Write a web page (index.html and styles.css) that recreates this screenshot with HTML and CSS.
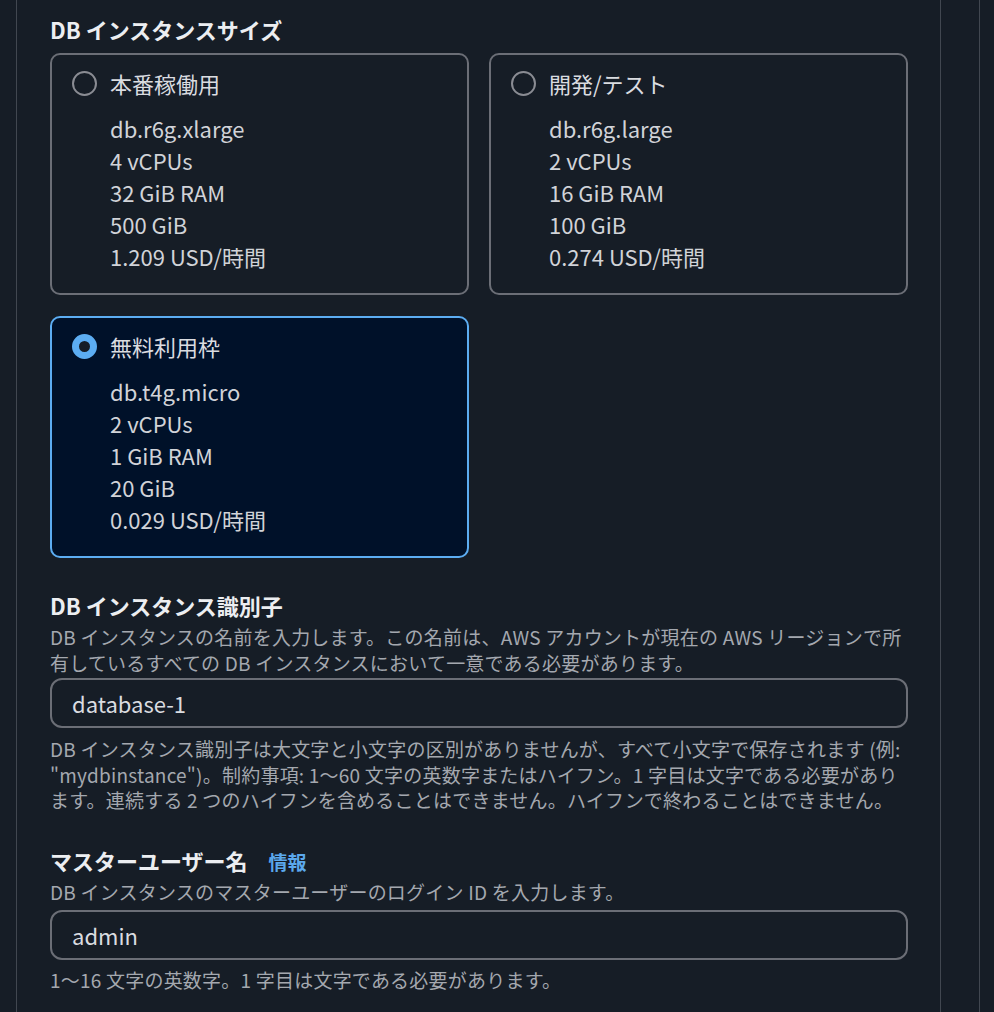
FILE: index.html
```html
<!DOCTYPE html>
<html lang="ja">
<head>
    <meta charset="UTF-8">
    <meta name="viewport" content="width=device-width, initial-scale=1.0">
    <title>データベースの作成</title>
    <link rel="stylesheet" href="styles.css">
</head>
<body>
    <div class="layout">
        <div class="panel">
            <!-- DB instance size -->
            <div class="field">
                <div class="label">DB インスタンスサイズ</div>
                <div class="tiles">
                    <div class="tile">
                        <div class="tile-head">
                            <span class="radio"></span>
                            <span class="tile-title">本番稼働用</span>
                        </div>
                        <div class="tile-body">
                            <div>db.r6g.xlarge</div>
                            <div>4 vCPUs</div>
                            <div>32 GiB RAM</div>
                            <div>500 GiB</div>
                            <div>1.209 USD/時間</div>
                        </div>
                    </div>
                    <div class="tile">
                        <div class="tile-head">
                            <span class="radio"></span>
                            <span class="tile-title">開発/テスト</span>
                        </div>
                        <div class="tile-body">
                            <div>db.r6g.large</div>
                            <div>2 vCPUs</div>
                            <div>16 GiB RAM</div>
                            <div>100 GiB</div>
                            <div>0.274 USD/時間</div>
                        </div>
                    </div>
                    <div class="tile selected">
                        <div class="tile-head">
                            <span class="radio checked"></span>
                            <span class="tile-title">無料利用枠</span>
                        </div>
                        <div class="tile-body">
                            <div>db.t4g.micro</div>
                            <div>2 vCPUs</div>
                            <div>1 GiB RAM</div>
                            <div>20 GiB</div>
                            <div>0.029 USD/時間</div>
                        </div>
                    </div>
                </div>
            </div>

            <!-- DB instance identifier -->
            <div class="field">
                <div class="label">DB インスタンス識別子</div>
                <div class="desc">DB インスタンスの名前を入力します。この名前は、AWS アカウントが現在の AWS リージョンで所有しているすべての DB インスタンスにおいて一意である必要があります。</div>
                <div class="input">database-1</div>
                <div class="hint">DB インスタンス識別子は大文字と小文字の区別がありませんが、すべて小文字で保存されます (例: "mydbinstance")。制約事項: 1〜60 文字の英数字またはハイフン。1 字目は文字である必要があります。連続する 2 つのハイフンを含めることはできません。ハイフンで終わることはできません。</div>
            </div>

            <!-- Master username -->
            <div class="field field-last">
                <div class="label">マスターユーザー名<a class="info" href="#">情報</a></div>
                <div class="desc">DB インスタンスのマスターユーザーのログイン ID を入力します。</div>
                <div class="input">admin</div>
                <div class="hint">1〜16 文字の英数字。1 字目は文字である必要があります。</div>
            </div>
        </div>
    </div>
</body>
</html>
```

FILE: styles.css
```css
* {
    margin: 0;
    padding: 0;
    box-sizing: border-box;
}

body {
    background: #161d26;
    color: #d1d3d8;
    font-family: "Noto Sans CJK JP", "Noto Sans", sans-serif;
    overflow: hidden;
}

.layout {
    display: flex;
    height: 100vh;
    padding-left: 16px;
}

.panel {
    width: 925px;
    border-left: 1px solid #414750;
    border-right: 1px solid #414750;
    padding: 13px 32px 0 33px;
    margin-right: 38px;
}

.layout::after {
    content: "";
    border-left: 1px solid #414750;
}

.field + .field {
    margin-top: 31px;
}

.label {
    font-size: 22px;
    font-weight: 700;
    line-height: 32px;
    color: #eceef1;
}

.info {
    color: #5ba8ec;
    font-size: 19px;
    font-weight: 700;
    text-decoration: none;
    margin-left: 21px;
}

.tiles {
    display: grid;
    grid-template-columns: 1fr 1fr;
    column-gap: 20px;
    row-gap: 21px;
    margin-top: 8px;
}

.tile {
    border: 2px solid #6b6e76;
    border-radius: 10px;
    padding: 12px 20px 21px 20px;
}

.tile.selected {
    border-color: #5cadf2;
    background: #001129;
}

.tile-head {
    display: flex;
    align-items: center;
    gap: 13px;
    height: 32px;
}

.radio {
    width: 25px;
    height: 25px;
    border: 2.5px solid #8a8c93;
    border-radius: 50%;
    flex-shrink: 0;
}

.radio.checked {
    border: 7.5px solid #5cadf2;
    background: #161d26;
}

.tile-title {
    font-size: 22px;
    line-height: 32px;
    color: #dadce0;
}

.tile-body {
    margin-top: 13px;
    padding-left: 38px;
    font-size: 22px;
    line-height: 32px;
    color: #d1d3d8;
}

.desc {
    margin-top: 3px;
    font-size: 19px;
    line-height: 25.6px;
    letter-spacing: 0.22px;
    color: #a4a8af;
}

.input {
    margin-top: 3px;
    height: 50px;
    border: 2px solid #6b6e76;
    border-radius: 12px;
    padding: 0 20px;
    display: flex;
    align-items: center;
    font-size: 22px;
    color: #dadce0;
}

.field-last .desc {
    margin-top: 1px;
}

.field-last .input {
    margin-top: 5px;
}

.hint {
    margin-top: 8px;
    font-size: 19px;
    line-height: 25.6px;
    letter-spacing: 0.22px;
    color: #a4a8af;
}

.field-last .hint {
    margin-top: 7px;
}
```
